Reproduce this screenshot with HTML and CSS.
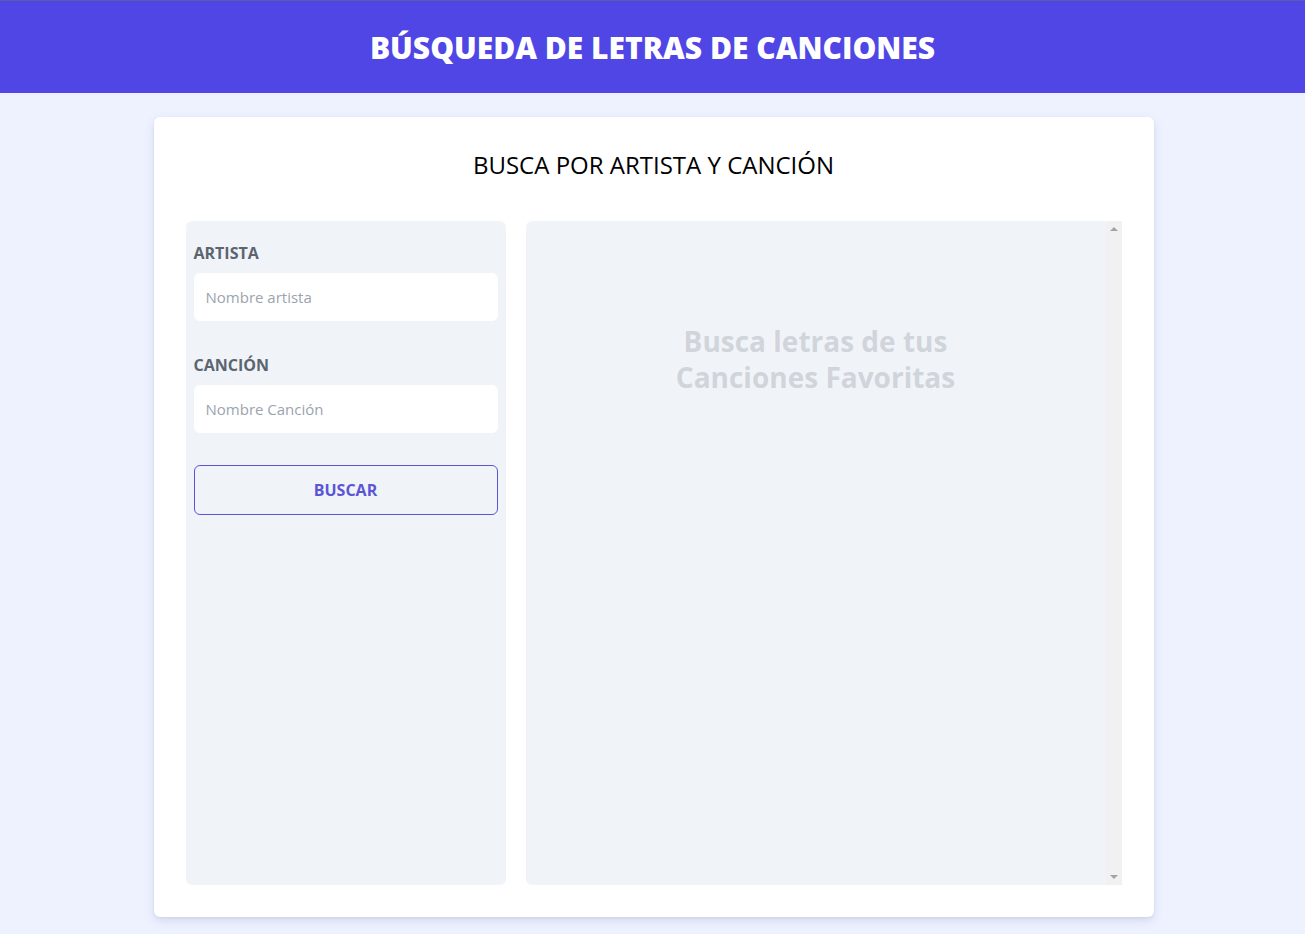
FILE: index.html
```html
<!DOCTYPE html>
<html lang="es">
<head>
<meta charset="utf-8">
<title>Búsqueda de letras</title>
<link rel="stylesheet" href="styles.css">
</head>
<body>
<header class="topbar">
  <h1 class="title">BÚSQUEDA DE LETRAS DE CANCIONES</h1>
</header>
<main class="wrap">
  <section class="card">
    <h2 class="subtitle">BUSCA POR ARTISTA Y CANCIÓN</h2>
    <div class="grid">
      <form class="form">
        <div class="field">
          <label class="label">ARTISTA</label>
          <input class="input" type="text" placeholder="Nombre artista">
        </div>
        <div class="field">
          <label class="label">CANCIÓN</label>
          <input class="input" type="text" placeholder="Nombre Canción">
        </div>
        <button class="btn" type="button">BUSCAR</button>
      </form>
      <div class="result">
        <div class="result-body">
          <p class="empty">Busca letras de tus Canciones Favoritas</p>
        </div>
        <div class="scrollbar" aria-hidden="true">
          <span class="arrow arrow-up"></span>
          <span class="arrow arrow-down"></span>
        </div>
      </div>
    </div>
  </section>
</main>
</body>
</html>
```

FILE: styles.css
```css
* { box-sizing: border-box; }
html, body { margin: 0; padding: 0; }
body {
  background: #eef2ff;
  font-family: "Open Sans", "Noto Sans", sans-serif;
  color: #111;
  min-height: 100vh;
}
.topbar {
  background: #4f46e5;
  height: 93px;
  border-top: 1px solid #5b5bb0;
  display: flex;
  align-items: center;
  justify-content: center;
}
.title {
  margin: 0;
  color: #fff;
  font-size: 30px;
  font-weight: 800;
  letter-spacing: 0;
  line-height: 36px;
  padding-top: 2px;
}
.wrap {
  display: flex;
  justify-content: center;
  padding-top: 24px;
  padding-left: 2px;
}
.card {
  width: 1000px;
  height: 800px;
  background: #fff;
  border-radius: 6px;
  box-shadow: 0 4px 10px rgba(100, 110, 160, 0.18), 0 1px 3px rgba(0,0,0,0.06);
  padding: 32px;
  display: flex;
  flex-direction: column;
}
.subtitle {
  margin: 0;
  text-align: center;
  font-weight: 400;
  font-size: 24px;
  line-height: 32px;
  color: #000;
  height: 72px;
}
.grid {
  flex: 1;
  display: grid;
  grid-template-columns: 320px 1fr;
  gap: 20px;
  min-height: 0;
}
.form {
  background: #f0f4f8;
  border-radius: 6px;
  padding: 20px 8px 8px;
  display: flex;
  flex-direction: column;
}
.field { margin-bottom: 32px; }
.label {
  display: block;
  font-size: 16px;
  font-weight: 700;
  color: #5c6470;
  line-height: 24px;
  margin-bottom: 8px;
}
.input {
  display: block;
  width: 100%;
  height: 48px;
  border: none;
  outline: none;
  border-radius: 6px;
  background: #fff;
  padding: 0 12px;
  font-family: inherit;
  font-size: 15px;
  color: #374151;
}
.input::placeholder { color: #9ca3af; }
.btn {
  height: 50px;
  width: 100%;
  background: transparent;
  border: 1px solid #5b55d6;
  border-radius: 6px;
  color: #5b55d6;
  font-family: inherit;
  font-size: 16px;
  font-weight: 700;
}
.result {
  background: #f0f4f8;
  border-radius: 6px 0 0 6px;
  display: flex;
  min-height: 0;
}
.result-body {
  flex: 1;
  padding-top: 102px;
  display: flex;
  justify-content: center;
  align-items: flex-start;
}
.empty {
  margin: 0;
  width: 300px;
  text-align: center;
  font-size: 28px;
  line-height: 36px;
  font-weight: 700;
  color: #d1d5db;
}
.scrollbar {
  width: 16px;
  background: #f1f1f1;
  display: flex;
  flex-direction: column;
  justify-content: space-between;
  align-items: center;
  padding: 6px 0;
}
.arrow {
  width: 0;
  height: 0;
  border-left: 4px solid transparent;
  border-right: 4px solid transparent;
}
.arrow-up { border-bottom: 4px solid #a3a3a3; }
.arrow-down { border-top: 4px solid #a3a3a3; }
```
